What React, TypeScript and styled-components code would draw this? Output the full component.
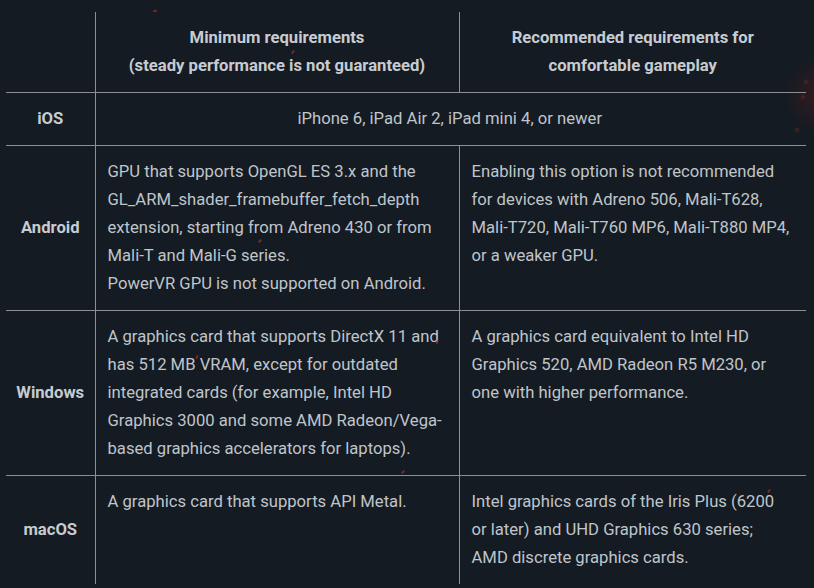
import styled, { createGlobalStyle } from 'styled-components';

const GlobalStyle = createGlobalStyle`
    html, body {
        margin: 0;
        background: #151b22;
    }
    body {
        font-family: Roboto, "Liberation Sans", sans-serif;
        font-size: 16.65px;
        color: #bfc5cb;
    }
`;

const Page = styled.div`
    position: relative;
    width: 814px;
    height: 588px;
    overflow: hidden;
    padding: 12px 8px 0 6px;
    box-sizing: border-box;
    background:
        radial-gradient(circle at 822px 95px, rgba(110, 28, 28, 0.35), rgba(21, 27, 34, 0) 38px),
        #151b22;
`;

const Table = styled.table`
    width: 800px;
    table-layout: fixed;
    border-collapse: collapse;
    line-height: 28px;
`;

const Row = styled.tr`
    & + & > * {
        border-top: 1px solid #8c9096;
    }
`;

const HeadCell = styled.th`
    padding: 12px 8px;
    font-weight: 700;
    color: #c6ccd1;
    text-align: center;
    vertical-align: middle;

    & + & {
        border-left: 1px solid #8c9096;
    }
`;

const Label = styled.th`
    padding: 12px 2px;
    font-weight: 700;
    color: #c6ccd1;
    text-align: center;
    vertical-align: middle;
`;

const Cell = styled.td<{ $center?: boolean }>`
    padding: 12px 14px 12px 12px;
    text-align: ${(p) => (p.$center ? 'center' : 'left')};
    vertical-align: top;
    border-left: 1px solid #8c9096;
`;

const Speck = styled.span<{ $x: number; $y: number; $r?: number; $dot?: boolean }>`
    position: absolute;
    left: ${(p) => p.$x}px;
    top: ${(p) => p.$y}px;
    width: ${(p) => (p.$dot ? 4 : 2)}px;
    height: 4px;
    border-radius: 2px;
    background: ${(p) => (p.$dot ? '#6a2a2c' : '#9c2f2a')};
    opacity: ${(p) => (p.$dot ? 0.7 : 0.75)};
    filter: ${(p) => (p.$dot ? 'blur(1px)' : 'none')};
    transform: rotate(${(p) => p.$r ?? 30}deg);
`;

const specks = [
    { x: 154, y: 9, r: 80 },
    { x: 292, y: 50, r: 35 },
    { x: 259, y: 239, r: 40 },
    { x: 346, y: 330, r: 60 },
    { x: 196, y: 355, r: 20 },
    { x: 402, y: 470, r: 50 },
    { x: 436, y: 340, r: 10 },
    { x: 768, y: 489, r: 30 },
    { x: 804, y: 80, r: 0, dot: true },
    { x: 801, y: 95, r: 0, dot: true },
    { x: 795, y: 128, r: 0, dot: true },
];

const App = (): JSX.Element => (
    <>
        <GlobalStyle />
        <Page>
            <Table>
                <colgroup>
                    <col style={{ width: 89 }} />
                    <col style={{ width: 364 }} />
                    <col style={{ width: 347 }} />
                </colgroup>
                <tbody>
                    <Row>
                        <HeadCell />
                        <HeadCell>
                            Minimum requirements
                            <br />
                            (steady performance is not guaranteed)
                        </HeadCell>
                        <HeadCell>
                            Recommended requirements for
                            <br />
                            comfortable gameplay
                        </HeadCell>
                    </Row>
                    <Row>
                        <Label>iOS</Label>
                        <Cell colSpan={2} $center>
                            iPhone 6, iPad Air 2, iPad mini 4, or newer
                        </Cell>
                    </Row>
                    <Row>
                        <Label>Android</Label>
                        <Cell>
                            GPU that supports OpenGL ES 3.x and the GL_ARM_shader_framebuffer_fetch_depth
                            extension, starting from Adreno 430 or from Mali-T and Mali-G series.
                            <br />
                            PowerVR GPU is not supported on Android.
                        </Cell>
                        <Cell>
                            Enabling this option is not recommended for devices with Adreno 506, Mali-T628,
                            Mali-T720, Mali-T760 MP6, Mali-T880 MP4, or a weaker GPU.
                        </Cell>
                    </Row>
                    <Row>
                        <Label>Windows</Label>
                        <Cell>
                            A graphics card that supports DirectX 11 and has 512 MB VRAM, except for outdated
                            integrated cards (for example, Intel HD Graphics 3000 and some AMD Radeon/Vega-based
                            graphics accelerators for laptops).
                        </Cell>
                        <Cell>
                            A graphics card equivalent to Intel HD Graphics 520, AMD Radeon R5 M230, or one
                            with higher performance.
                        </Cell>
                    </Row>
                    <Row>
                        <Label>macOS</Label>
                        <Cell>A graphics card that supports API Metal.</Cell>
                        <Cell>
                            Intel graphics cards of the Iris Plus (6200 or later) and UHD Graphics 630
                            series; AMD discrete graphics cards.
                        </Cell>
                    </Row>
                </tbody>
            </Table>
            {specks.map((s, i) => (
                <Speck key={i} $x={s.x} $y={s.y} $r={s.r} $dot={s.dot} />
            ))}
        </Page>
    </>
);

export default App;
